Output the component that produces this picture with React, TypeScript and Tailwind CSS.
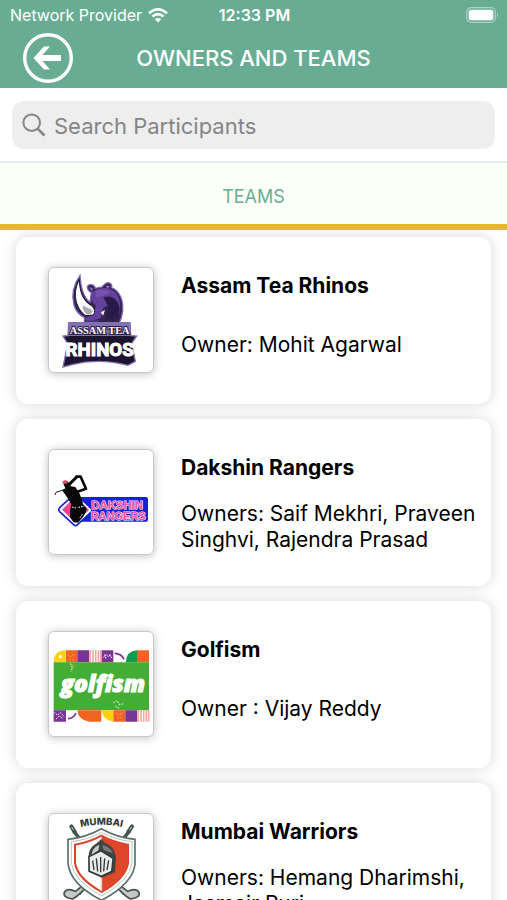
import { useState } from 'react';

// Each crest is drawn on the same 312 unit square
function RhinosLogo() {
  return (
    <svg viewBox="27 27 312 312" className="h-full w-full" role="img" aria-label="Assam Tea Rhinos logo">
      <path d="M120 49 C101 76 94 108 102 138 C108 160 122 170 134 176 L132 194 L236 196 L244 176 C252 150 250 118 232 98 C223 88 214 86 214 86 C219 74 205 66 194 76 L186 84 L166 88 C163 76 148 73 142 82 C141 92 149 98 154 101 L150 130 C128 114 122 82 120 49Z" fill="#33234f" stroke="#7d68b5" strokeWidth="4" />
      <path d="M155 102 C176 82 209 82 228 102 C242 118 244 148 236 172 C226 150 208 132 190 146 L182 178 L140 190 L137 176 L160 168 L168 140 L154 126Z" fill="#63419c" />
      <path d="M190 116 C212 104 238 122 239 152 L234 180 L224 168 L219 190 L209 176 L196 186 L206 150 C202 136 198 128 190 116Z" fill="#291b48" />
      <path d="M167 96 C182 89 200 91 212 99 L190 111 L169 116Z" fill="#7852ac" />
      <path d="M146 84 L159 88 L157 98Z M196 80 L210 80 L204 90Z" fill="#8a68b8" />
      <path d="M118 62 C98 98 103 145 137 170 L160 168 C168 157 162 144 151 138 C128 124 119 97 118 62Z" fill="#fff" stroke="#1d162b" strokeWidth="3" />
      <path d="M128 138 C136 146 149 146 159 156 L152 166 L140 166 C131 160 128 148 128 138Z" fill="#aaa8b4" />
      <path d="M183 160 L195 153 L189 170Z" fill="#fff" />
      <path d="M136 184 C154 188 164 177 179 185 L167 195 L142 194Z" fill="#4c327a" />
      <path d="M86 191 L270 191 L272 230 L290 231 L275 253 L286 307 L264 319 Q176 296 96 317 L69 324 L83 254 L69 231 L84 230Z" fill="#1d1530" stroke="#8270b4" strokeWidth="4" />
      <path d="M86 191 H270 L273 231 H84Z" fill="#8270b4" />
      <text x="179" y="224" textAnchor="middle" fontFamily="Liberation Serif, serif" fontWeight="700" fontSize="31" fill="#fff" stroke="#2a2041" strokeWidth="6" paintOrder="stroke">ASSAM TEA</text>
      <text x="179" y="292" textAnchor="middle" fontFamily="Roboto, sans-serif" fontWeight="700" fontSize="56" fill="#fff" stroke="#fff" strokeWidth="3">RHINOS</text>
    </svg>
  );
}

function RangersLogo() {
  return (
    <svg viewBox="27 27 312 312" className="h-full w-full" role="img" aria-label="Dakshin Rangers logo">
      <rect x="112" y="168" width="212" height="74" rx="6" fill="#1721d5" />
      <path d="M106 157 L154 203 Q158 208 153 213 L111 252 Q106 256 101 251 L58 211 Q54 206 59 200Z" fill="#fff" stroke="#1721d5" strokeWidth="5" />
      <path d="M106 166 L147 207 L106 245 L66 206Z" fill="#f34390" />
      <path d="M106 107 L122 107 L138 143 L112 152" fill="none" stroke="#090909" strokeWidth="8" strokeLinejoin="round" />
      <path d="M110 108 L84 134" fill="none" stroke="#090909" strokeWidth="9" />
      <path d="M70 128 Q78 116 88 126 L92 136 L106 138 L118 156 L126 176 L130 192 L140 202 L138 213 L129 228 L114 245 L100 243 L90 229 L90 209 L94 190 L84 173 L74 158 L66 148 L76 142Z" fill="#090909" />
      <path d="M68 121 Q77 114 84 122 L80 129 L68 127Z" fill="#ea4260" />
      <path d="M73 146 L48 154 L45 162" fill="none" stroke="#222" strokeWidth="3" />
      <path d="M96 198 L108 201 M115 199 L132 196 M120 230 L129 217" stroke="#fff" strokeWidth="3" strokeDasharray="5 3" />
      <g fontFamily="Liberation Sans, sans-serif" fontWeight="700" fontSize="34" fill="#f55098" stroke="#fff" strokeWidth="3" paintOrder="stroke">
        <text x="154" y="203">DAKSHIN</text>
        <text x="152" y="236" fontSize="33">RANGERS</text>
      </g>
    </svg>
  );
}

function GolfismLogo() {
  return (
    <svg viewBox="27 27 312 312" className="h-full w-full" role="img" aria-label="Golfism logo">
      <path d="M41 118 Q41 82 77 82 V118Z" fill="#fbd20d" />
      <circle cx="61" cy="101" r="5" fill="#fff" />
      <path d="M78 82 h34 v36 h-34Z" fill="#f26424" />
      <path d="M112 82 h36 v36 h-36Z" fill="#793494" />
      <path d="M151 82 v36 M159 82 v36 M167 82 v36 M175 82 v36 M182 82 v36" stroke="#f4aaa0" strokeWidth="5" />
      <path d="M185 82 h35 v36 h-35Z" fill="#793494" />
      <path d="M190 103 l10 -8 5 6 9 -7 M194 94 l4 14 M208 94 l8 12" stroke="#fff" strokeWidth="3" strokeDasharray="5 3" fill="none" />
      <path d="M224 91 Q245 92 252 109" fill="none" stroke="#793494" strokeWidth="5" />
      <path d="M257 118 Q259 84 291 82 V118Z" fill="#119b52" />
      <path d="M291 82 H327 V118 H291Z" fill="#f26424" />
      <path d="M41 118 H327 V262 H41Z" fill="#43ad35" />
      <path d="M84 96 l8 6 7 -9 7 5 M88 109 l14 3 M91 121 l6 12 -4 13 M99 124 l4 10" fill="none" stroke="#f5a45c" strokeWidth="3" strokeDasharray="5 3" />
      <path d="M91 122 l6 11 -4 12 M220 239 l12 -6 6 12 14 -3 M226 250 l12 6" fill="none" stroke="#b9e19a" strokeWidth="4" strokeDasharray="5 3" />
      <path d="M41 262 h37 v34 h-37Z" fill="#793494" />
      <path d="M43 268 l9 8 10 -7 10 12 M48 288 l9 -9 12 8" fill="none" stroke="#fff" strokeWidth="3" strokeDasharray="4 3" />
      <path d="M84 287 Q101 286 108 270" fill="none" stroke="#793494" strokeWidth="5" />
      <path d="M112 262 H184 V296 H148 Q116 293 112 262Z" fill="#f26424" />
      <path d="M185 262 H220 V296 Q188 292 185 262Z" fill="#fbd20d" />
      <path d="M220 262 h36 v34 h-36Z" fill="#f26424" />
      <path d="M227 270 l12 7 8 -9 M232 286 l14 -4" fill="none" stroke="#f9b17d" strokeWidth="3" strokeDasharray="4 3" />
      <path d="M256 262 h36 v34 h-36Z" fill="#793494" />
      <path d="M295 262 v34 M303 262 v34 M311 262 v34 M319 262 v34 M326 262 v34" stroke="#f4aaa0" strokeWidth="5" />
      <text x="189" y="208" textAnchor="middle" fontFamily="Open Sans, Noto Sans, sans-serif" fontWeight="800" fontStyle="italic" fontSize="69" fill="#fff" stroke="#fff" strokeWidth="3">golfism</text>
    </svg>
  );
}

function WarriorsLogo() {
  return (
    <svg viewBox="27 36 312 312" className="h-full w-full" role="img" aria-label="Mumbai Warriors logo">
      <path d="M105 91 L94 73 M264 91 L276 73" fill="none" stroke="#46534e" strokeWidth="12" strokeLinecap="round" />
      <path d="M105 91 L95 75 M264 91 L275 75" fill="none" stroke="#c4c8c7" strokeWidth="3" />
      <path d="M270 85 L117 276 M99 85 L253 276" fill="none" stroke="#46534e" strokeWidth="10" />
      <path d="M127 252 L106 268 Q83 256 73 271 Q68 287 97 291 Q110 286 132 263Z M242 252 L263 268 Q288 256 297 271 Q302 287 272 291 Q259 286 237 263Z" fill="#c4c8c7" stroke="#46534e" strokeWidth="5" />
      <path d="M84 112 Q136 107 184 80 Q232 107 285 112 V187 Q278 245 185 295 Q91 247 84 184Z" fill="#fff" stroke="#5c716a" strokeWidth="5" />
      <path d="M94 119 Q144 113 184 91 Q225 113 276 119 V184 Q269 235 185 282 Q100 236 94 184Z" fill="none" stroke="#bbc6c0" strokeWidth="3" />
      <path d="M105 128 Q148 121 184 101 Q220 121 264 128 V183 Q257 229 185 270 Q112 229 105 183Z" fill="#fff" stroke="#d94428" strokeWidth="6" />
      <path d="M185 102 Q220 121 264 128 V183 Q257 229 185 270Z" fill="#e04729" />
      <path d="M184 222 V266" stroke="#f4d7ce" strokeWidth="5" />
      <path d="M145 164 Q146 137 171 123 L184 111 L195 123 Q221 131 228 163 L225 211 L185 227 L145 209Z" fill="#414443" />
      <path d="M147 164 L183 147 L219 169 L215 208 L184 222 L148 207Z" fill="#e9eceb" stroke="#323636" strokeWidth="4" />
      <path d="M155 158 Q157 137 178 128 L175 145Z" fill="#c8cecc" />
      <path d="M187 128 Q211 135 219 154 L191 144Z" fill="#777e7b" />
      <path d="M158 176 L162 204 M169 169 L173 208 M182 165 V211 M194 169 L191 208 M206 175 L201 204" stroke="#303434" strokeWidth="4" />
      <path id="warriors-arc" d="M112 78 Q184 58 257 78" fill="none" />
      <text fontFamily="Inter, sans-serif" fontWeight="800" fontSize="29" fill="#343b38">
        <textPath href="#warriors-arc" startOffset="50%" textAnchor="middle">MUMBAI</textPath>
      </text>
    </svg>
  );
}

const teams = [
  { name: 'Assam Tea Rhinos', owners: 'Owner: Mohit Agarwal', Logo: RhinosLogo },
  { name: 'Dakshin Rangers', owners: 'Owners: Saif Mekhri, Praveen Singhvi, Rajendra Prasad', Logo: RangersLogo },
  { name: 'Golfism', owners: 'Owner : Vijay Reddy', Logo: GolfismLogo },
  { name: 'Mumbai Warriors', owners: 'Owners: Hemang Dharimshi, Jasmair Puri', Logo: WarriorsLogo },
];

function StatusBar() {
  return (
    <div className="grid h-7 grid-cols-3 items-center pt-0.5 pr-2 pl-2.5 text-base">
      <div className="flex items-center gap-1.5 whitespace-nowrap">
        <span>Network Provider</span>
        <svg viewBox="0 0 20 15" className="h-[15px] w-5 shrink-0" fill="none" stroke="currentColor" strokeWidth="2.6" aria-hidden="true">
          <path d="M1 5.2 Q10 -2.8 19 5.2" />
          <path d="M4.4 8.6 Q10 3.6 15.6 8.6" />
          <path d="M10 14.5 L6.8 11.2 Q10 8.6 13.2 11.2Z" fill="currentColor" stroke="none" />
        </svg>
      </div>
      <span className="text-center font-semibold whitespace-nowrap">12:33 PM</span>
      <svg viewBox="0 0 33 16" className="h-4 w-[33px] justify-self-end" aria-hidden="true">
        <rect x="0.7" y="0.7" width="28.6" height="14.6" rx="4.5" fill="none" stroke="#fff" strokeOpacity="0.45" strokeWidth="1.2" />
        <rect x="2.7" y="2.7" width="24.6" height="10.6" rx="2.5" fill="#fff" />
        <path d="M31 5.5 Q33 8 31 10.5Z" fill="#fff" fillOpacity="0.5" />
      </svg>
    </div>
  );
}

export default function App() {
  const [query, setQuery] = useState('');

  const visible = teams.filter((team) =>
    `${team.name} ${team.owners}`.toLowerCase().includes(query.toLowerCase())
  );

  return (
    <div className="flex h-screen flex-col overflow-hidden bg-white font-['Inter',sans-serif] text-black">
      <header className="shrink-0 bg-[#68ad93] text-white">
        <StatusBar />
        <div className="grid h-15 grid-cols-[52px_1fr_52px] items-center px-[22px]">
          <button type="button" aria-label="Back">
            <svg viewBox="0 0 52 52" className="h-[52px] w-[52px]" aria-hidden="true">
              <circle cx="26" cy="26" r="23.3" fill="none" stroke="#fff" strokeWidth="3.4" />
              <path d="M11.5 26 L22 14.5 H28 L20.5 23 H39 V29 H20.5 L28 37.5 H22Z" fill="#fff" />
            </svg>
          </button>
          <h1 className="text-center text-[22px] font-medium whitespace-nowrap">OWNERS AND TEAMS</h1>
        </div>
      </header>

      <div className="shrink-0 border-b-2 border-[#e9ece9] px-3 pt-[13px] pb-3">
        <label className="flex h-12 items-center gap-2 rounded-xl bg-[#eeeeee] px-2.5 text-[#858585]">
          <svg viewBox="0 0 24 24" className="h-6 w-6 shrink-0" fill="none" stroke="currentColor" aria-hidden="true">
            <circle cx="9.7" cy="9.7" r="8.3" strokeWidth="2" />
            <path d="M15.8 15.8 L22.5 22.5" strokeWidth="2.6" />
          </svg>
          <input
            type="search"
            aria-label="Search Participants"
            placeholder="Search Participants"
            value={query}
            onChange={(e) => setQuery(e.target.value)}
            className="min-w-0 flex-1 bg-transparent pt-0.5 text-[22px] text-black outline-none placeholder:text-[#858585]"
          />
        </label>
      </div>

      <nav className="shrink-0 bg-[#fcfff8]">
        <button type="button" className="h-[67px] w-full border-b-[6px] border-[#e7b53b] pt-1.5 text-lg text-[#68ad93]">
          TEAMS
        </button>
      </nav>

      <main className="min-h-0 flex-1 overflow-y-auto px-4 pt-[7px] pb-4 [scrollbar-width:none]">
        <ul className="flex flex-col gap-[15px]">
          {visible.map(({ name, owners, Logo }) => (
            <li key={name} className="flex items-center gap-[27px] rounded-xl bg-white pt-[30px] pr-2 pb-[31px] pl-8 shadow-[0_0_14px_rgba(0,0,0,0.16)]">
              <div className="h-[106px] w-[106px] shrink-0 overflow-hidden rounded-md border border-[#c9c9c9] bg-white shadow-[0_1px_8px_rgba(0,0,0,0.25)]">
                <Logo />
              </div>
              <div className="min-w-0 flex-1 pt-1">
                <h2 className="text-[21px] leading-[26px] font-bold">{name}</h2>
                <div className="mt-5 flex min-h-[52px] items-center">
                  <p className="text-[21px] leading-[26px]">{owners}</p>
                </div>
              </div>
            </li>
          ))}
        </ul>
      </main>
    </div>
  );
}
